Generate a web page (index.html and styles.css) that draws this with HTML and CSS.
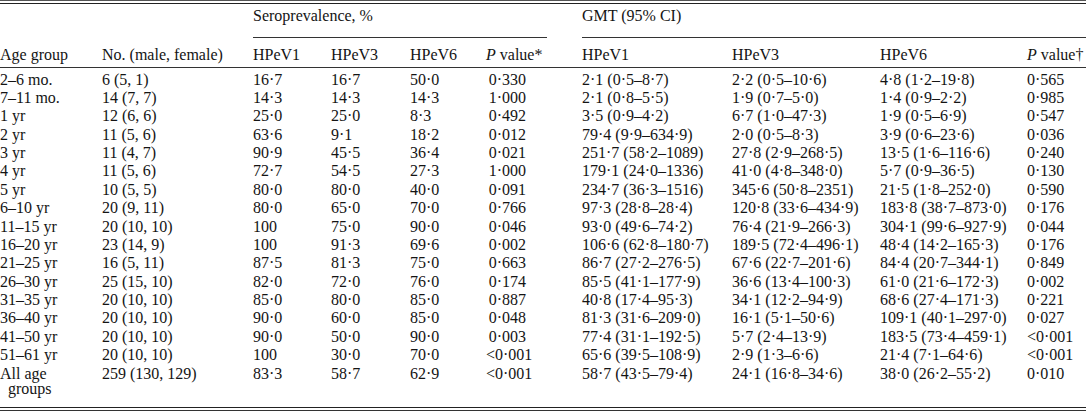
FILE: index.html
```html
<!DOCTYPE html>
<html lang="en">
<head>
<meta charset="utf-8">
<title>Seroprevalence and GMT by age group</title>
<link rel="stylesheet" href="styles.css">
</head>
<body>
<div class="frame">
<table class="tbl">
<colgroup>
<col class="c-age"><col class="c-no"><col class="c-s1"><col class="c-s3"><col class="c-s6"><col class="c-sp">
<col class="c-gap">
<col class="c-g1"><col class="c-g3"><col class="c-g6"><col class="c-gp">
</colgroup>
<thead>
<tr class="head-group">
<th></th><th></th>
<th class="group" colspan="4">Seroprevalence, %</th>
<th></th>
<th class="group" colspan="4">GMT (95% CI)</th>
</tr>
<tr class="head-cols">
<th>Age group</th>
<th>No. (male, female)</th>
<th>HPeV1</th><th>HPeV3</th><th>HPeV6</th><th><i>P</i> value*</th>
<th></th>
<th>HPeV1</th><th>HPeV3</th><th>HPeV6</th><th><i>P</i> value†</th>
</tr>
</thead>
<tbody>
<tr><td class="age">2–6 mo.</td><td>6 (5, 1)</td><td>16·7</td><td>16·7</td><td>50·0</td><td class="pv pv-s">0·330</td><td></td><td>2·1 (0·5–8·7)</td><td>2·2 (0·5–10·6)</td><td>4·8 (1·2–19·8)</td><td class="pv pv-g">0·565</td></tr>
<tr><td class="age">7–11 mo.</td><td>14 (7, 7)</td><td>14·3</td><td>14·3</td><td>14·3</td><td class="pv pv-s">1·000</td><td></td><td>2·1 (0·8–5·5)</td><td>1·9 (0·7–5·0)</td><td>1·4 (0·9–2·2)</td><td class="pv pv-g">0·985</td></tr>
<tr><td class="age">1 yr</td><td>12 (6, 6)</td><td>25·0</td><td>25·0</td><td>8·3</td><td class="pv pv-s">0·492</td><td></td><td>3·5 (0·9–4·2)</td><td>6·7 (1·0–47·3)</td><td>1·9 (0·5–6·9)</td><td class="pv pv-g">0·547</td></tr>
<tr><td class="age">2 yr</td><td>11 (5, 6)</td><td>63·6</td><td>9·1</td><td>18·2</td><td class="pv pv-s">0·012</td><td></td><td>79·4 (9·9–634·9)</td><td>2·0 (0·5–8·3)</td><td>3·9 (0·6–23·6)</td><td class="pv pv-g">0·036</td></tr>
<tr><td class="age">3 yr</td><td>11 (4, 7)</td><td>90·9</td><td>45·5</td><td>36·4</td><td class="pv pv-s">0·021</td><td></td><td>251·7 (58·2–1089)</td><td>27·8 (2·9–268·5)</td><td>13·5 (1·6–116·6)</td><td class="pv pv-g">0·240</td></tr>
<tr><td class="age">4 yr</td><td>11 (5, 6)</td><td>72·7</td><td>54·5</td><td>27·3</td><td class="pv pv-s">1·000</td><td></td><td>179·1 (24·0–1336)</td><td>41·0 (4·8–348·0)</td><td>5·7 (0·9–36·5)</td><td class="pv pv-g">0·130</td></tr>
<tr><td class="age">5 yr</td><td>10 (5, 5)</td><td>80·0</td><td>80·0</td><td>40·0</td><td class="pv pv-s">0·091</td><td></td><td>234·7 (36·3–1516)</td><td>345·6 (50·8–2351)</td><td>21·5 (1·8–252·0)</td><td class="pv pv-g">0·590</td></tr>
<tr><td class="age">6–10 yr</td><td>20 (9, 11)</td><td>80·0</td><td>65·0</td><td>70·0</td><td class="pv pv-s">0·766</td><td></td><td>97·3 (28·8–28·4)</td><td>120·8 (33·6–434·9)</td><td>183·8 (38·7–873·0)</td><td class="pv pv-g">0·176</td></tr>
<tr><td class="age">11–15 yr</td><td>20 (10, 10)</td><td>100</td><td>75·0</td><td>90·0</td><td class="pv pv-s">0·046</td><td></td><td>93·0 (49·6–74·2)</td><td>76·4 (21·9–266·3)</td><td>304·1 (99·6–927·9)</td><td class="pv pv-g">0·044</td></tr>
<tr><td class="age">16–20 yr</td><td>23 (14, 9)</td><td>100</td><td>91·3</td><td>69·6</td><td class="pv pv-s">0·002</td><td></td><td>106·6 (62·8–180·7)</td><td>189·5 (72·4–496·1)</td><td>48·4 (14·2–165·3)</td><td class="pv pv-g">0·176</td></tr>
<tr><td class="age">21–25 yr</td><td>16 (5, 11)</td><td>87·5</td><td>81·3</td><td>75·0</td><td class="pv pv-s">0·663</td><td></td><td>86·7 (27·2–276·5)</td><td>67·6 (22·7–201·6)</td><td>84·4 (20·7–344·1)</td><td class="pv pv-g">0·849</td></tr>
<tr><td class="age">26–30 yr</td><td>25 (15, 10)</td><td>82·0</td><td>72·0</td><td>76·0</td><td class="pv pv-s">0·174</td><td></td><td>85·5 (41·1–177·9)</td><td>36·6 (13·4–100·3)</td><td>61·0 (21·6–172·3)</td><td class="pv pv-g">0·002</td></tr>
<tr><td class="age">31–35 yr</td><td>20 (10, 10)</td><td>85·0</td><td>80·0</td><td>85·0</td><td class="pv pv-s">0·887</td><td></td><td>40·8 (17·4–95·3)</td><td>34·1 (12·2–94·9)</td><td>68·6 (27·4–171·3)</td><td class="pv pv-g">0·221</td></tr>
<tr><td class="age">36–40 yr</td><td>20 (10, 10)</td><td>90·0</td><td>60·0</td><td>85·0</td><td class="pv pv-s">0·048</td><td></td><td>81·3 (31·6–209·0)</td><td>16·1 (5·1–50·6)</td><td>109·1 (40·1–297·0)</td><td class="pv pv-g">0·027</td></tr>
<tr><td class="age">41–50 yr</td><td>20 (10, 10)</td><td>90·0</td><td>50·0</td><td>90·0</td><td class="pv pv-s">0·003</td><td></td><td>77·4 (31·1–192·5)</td><td>5·7 (2·4–13·9)</td><td>183·5 (73·4–459·1)</td><td class="pv pv-g">&lt;0·001</td></tr>
<tr><td class="age">51–61 yr</td><td>20 (10, 10)</td><td>100</td><td>30·0</td><td>70·0</td><td class="pv pv-s">&lt;0·001</td><td></td><td>65·6 (39·5–108·9)</td><td>2·9 (1·3–6·6)</td><td>21·4 (7·1–64·6)</td><td class="pv pv-g">&lt;0·001</td></tr>
<tr><td class="age">All age groups</td><td>259 (130, 129)</td><td>83·3</td><td>58·7</td><td>62·9</td><td class="pv pv-s">&lt;0·001</td><td></td><td>58·7 (43·5–79·4)</td><td>24·1 (16·8–34·6)</td><td>38·0 (26·2–55·2)</td><td class="pv pv-g">0·010</td></tr>
</tbody>
</table>
</div>
</body>
</html>
```

FILE: styles.css
```css
html, body {
  margin: 0;
  padding: 0;
  background: #ffffff;
}

body {
  font-family: "Liberation Serif", "Times New Roman", serif;
  font-size: 16px;
  line-height: 15px;
  color: #141414;
}

.frame {
  width: 1086px;
  border-top: 1px solid #555555;
  border-bottom: 1px solid #333333;
  padding: 2px 0;
}

.tbl {
  width: 1086px;
  table-layout: fixed;
  border-collapse: separate;
  border-spacing: 0;
  border-top: 1px solid #222222;
  border-bottom: 1px solid #222222;
}

.c-age { width: 102px; }
.c-no { width: 151px; }
.c-s1 { width: 78px; }
.c-s3 { width: 79px; }
.c-s6 { width: 76px; }
.c-sp { width: 61px; }
.c-gap { width: 35px; }
.c-g1 { width: 150px; }
.c-g3 { width: 148px; }
.c-g6 { width: 147px; }
.c-gp { width: 59px; }

.tbl th,
.tbl td {
  padding: 1.7px 0;
  text-align: left;
  font-weight: normal;
  white-space: nowrap;
  vertical-align: top;
}

.head-group th {
  padding: 3.5px 0 14.5px;
}

.head-group .group {
  border-bottom: 1px solid #333333;
}

.head-cols th {
  padding: 9px 0 5px;
  border-bottom: 1px solid #333333;
}

.tbl tbody tr:first-child td {
  padding-top: 3.5px;
}

.tbl tbody tr:last-child td {
  padding-bottom: 11.1px;
}

.tbl td.age {
  white-space: normal;
  padding-left: 8px;
  padding-right: 20px;
  text-indent: -8px;
}

.tbl td.pv {
  text-align: right;
}

.tbl td.pv-s {
  padding-right: 21px;
}

.tbl td.pv-g {
  padding-right: 22px;
}
```
